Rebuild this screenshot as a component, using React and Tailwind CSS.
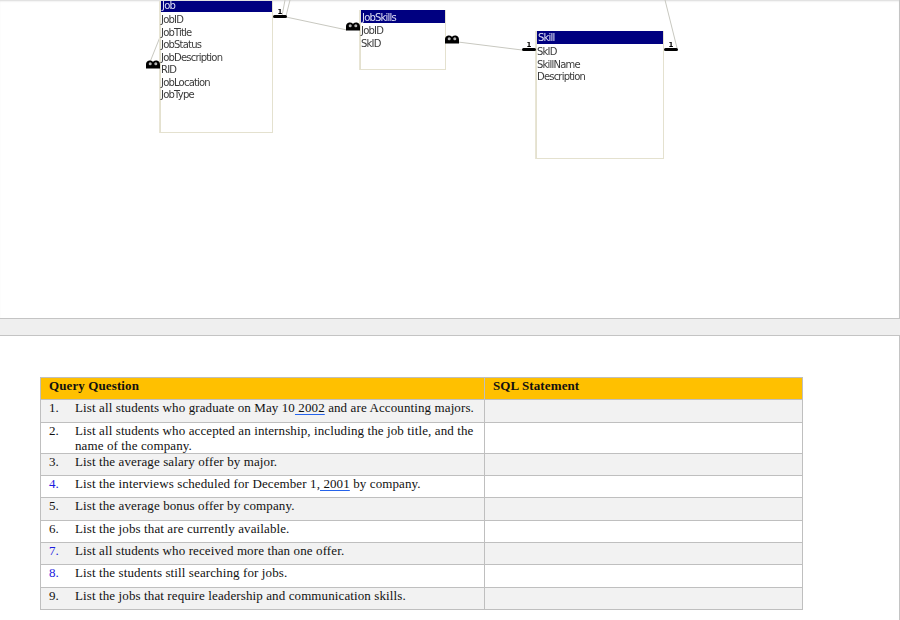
import React from 'react';

const rows = [
  { n: '1.', text: <>List all students who graduate on May 10<span className="underline decoration-[#2563eb] underline-offset-2"> 2002</span> and are Accounting majors.</>, h: 'h-[23px]', shade: true },
  { n: '2.', text: 'List all students who accepted an internship, including the job title, and the name of the company.', h: 'h-[31px]' },
  { n: '3.', text: 'List the average salary offer by major.', h: 'h-[22px]', shade: true },
  { n: '4.', text: <>List the interviews scheduled for December 1,<span className="underline decoration-[#2563eb] underline-offset-2"> 2001</span> by company.</>, h: 'h-[22px]', blue: true },
  { n: '5.', text: 'List the average bonus offer by company.', h: 'h-[23px]', shade: true },
  { n: '6.', text: 'List the jobs that are currently available.', h: 'h-[22px]' },
  { n: '7.', text: 'List all students who received more than one offer.', h: 'h-[22px]', shade: true, blue: true },
  { n: '8.', text: 'List the students still searching for jobs.', h: 'h-[23px]', blue: true },
  { n: '9.', text: 'List the jobs that require leadership and communication skills.', h: 'h-[22px]', shade: true },
];

// small access-style table box on the relationship canvas
const EntityBox = ({ title, fields, className, headerHeight }) => (
  <div className={`absolute border border-t-0 border-[#e4e1cf] bg-white shadow-[-1px_0_0_#e8e5d5] ${className}`}>
    <div className={`bg-[#000080] pl-px text-[#dfe0f5] ${headerHeight}`}>{title}</div>
    <div className="pt-[2px]">
      {fields.map((f) => (
        <div key={f} className="h-[12.5px] leading-[12.5px] text-[#3a3a3a]">{f}</div>
      ))}
    </div>
  </div>
);

const ManyMark = ({ className }) => (
  <svg className={`absolute ${className}`} width="14" height="9" viewBox="0 0 14 9">
    <path d="M0 8.500V5C0 1.500 2 .5 4 .5S6.500 1.500 7 2C7.500 1.500 8 .5 10 .5S14 1.500 14 5V8.500Z" fill="#000" />
    <circle cx="4.200" cy="3.800" r="1.500" fill="#b5b5b5" />
    <circle cx="9.800" cy="3.800" r="1.500" fill="#b5b5b5" />
  </svg>
);

const OneMark = ({ className }) => (
  <div className={`absolute w-[14px] ${className}`}>
    <div className="h-[6px] text-center font-['DejaVu_Sans',sans-serif] text-[7px] font-bold leading-[6px] text-black">1</div>
    <div className="h-[3px] rounded-sm bg-black" />
  </div>
);

export default function App() {
  return (
    <div className="h-[620px] w-[900px] overflow-hidden bg-white font-['Liberation_Serif',serif]">
      {/* diagram page */}
      <div className="relative h-[319px] border-r border-b border-[#c4c4c4] shadow-[inset_0_2px_2px_-1px_#d8d8d8]">
        <svg className="absolute inset-0" width="899" height="318">
          <g stroke="#c8c8c0" strokeWidth="1" fill="none">
            <path d="M286 16L290 0M282 16L285 0" />
            <path d="M286 17L347 30" />
            <path d="M160 37L150 62" />
            <path d="M458 42L522 50" />
            <path d="M677 48L665 0" />
          </g>
        </svg>
        <div className="font-['DejaVu_Sans',sans-serif] text-[10px] tracking-[-0.8px] blur-[0.3px]">
          <EntityBox
            title="Job"
            fields={['JobID', 'JobTitle', 'JobStatus', 'JobDescription', 'RID', 'JobLocation', 'JobType']}
            className="left-[160px] top-[1px] h-[132px] w-[113px]"
            headerHeight="h-[11px] leading-[9px]"
          />
          <EntityBox
            title="JobSkills"
            fields={['JobID', 'SkID']}
            className="left-[360px] top-[10px] h-[60px] w-[86px]"
            headerHeight="h-[13px] leading-[15px]"
          />
          <EntityBox
            title="Skill"
            fields={['SkID', 'SkillName', 'Description']}
            className="left-[536px] top-[31px] h-[128px] w-[128px]"
            headerHeight="h-[13px] leading-[13px]"
          />
        </div>
        <ManyMark className="left-[146px] top-[60px]" />
        <ManyMark className="left-[346px] top-[22px]" />
        <ManyMark className="left-[445px] top-[35px]" />
        <OneMark className="left-[273px] top-[9px]" />
        <OneMark className="left-[522px] top-[42px]" />
        <OneMark className="left-[664px] top-[42px]" />
      </div>

      <div className="h-[16px] bg-[#efefef]" />

      {/* table page */}
      <div className="h-[285px] border-t border-r border-[#c4c4c4] pt-[41px] pl-[40px]">
        <table className="w-[763px] table-fixed border-collapse text-[13px] tracking-[0.11px] text-[#111]">
          <colgroup>
            <col className="w-[444px]" />
            <col />
          </colgroup>
          <thead>
            <tr className="h-[22px] bg-[#ffc000] align-top font-bold leading-[15px]">
              <th className="border border-[#bfbfbf] pl-[8px] text-left">Query Question</th>
              <th className="border border-[#bfbfbf] pl-[8px] text-left">SQL Statement</th>
            </tr>
          </thead>
          <tbody>
            {rows.map((r) => (
              <tr key={r.n} className={`${r.h} align-top ${r.shade ? 'bg-[#f2f2f2]' : 'bg-white'}`}>
                <td className="border border-[#bfbfbf] p-0 leading-[14.5px]">
                  <div className="flex pl-[8px] pt-[1px]">
                    <span className={`w-[26px] shrink-0 ${r.blue ? 'text-[#1a1ae0]' : ''}`}>{r.n}</span>
                    <span className="pr-[8px]">{r.text}</span>
                  </div>
                </td>
                <td className="border border-[#bfbfbf] p-0" />
              </tr>
            ))}
          </tbody>
        </table>
      </div>
    </div>
  );
}
